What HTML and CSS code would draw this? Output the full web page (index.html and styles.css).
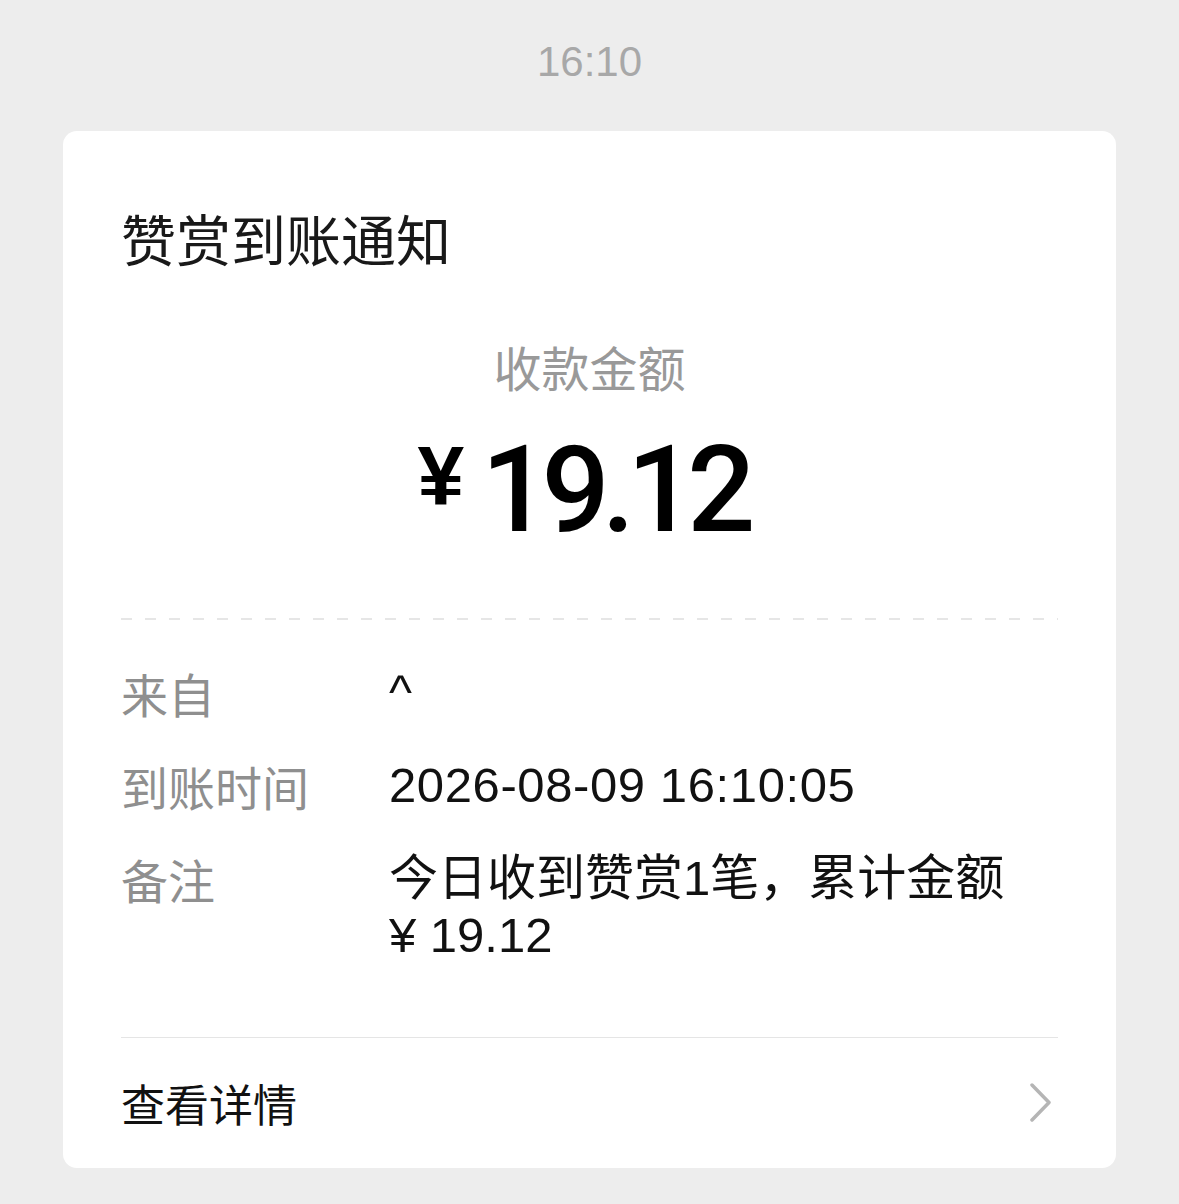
FILE: index.html
```html
<!DOCTYPE html>
<html lang="zh-CN">
<head>
<meta charset="utf-8">
<title>赞赏到账通知</title>
<link rel="stylesheet" href="styles.css">
</head>
<body>
<div class="time">16:10</div>
<div class="card">
  <div class="title">赞赏到账通知</div>
  <div class="amount-label">收款金额</div>
  <div class="amount"><span class="currency">¥</span><span class="num">19.12</span></div>
  <div class="dash"></div>
  <div class="rows">
    <div class="row"><div class="label">来自</div><div class="value">^</div></div>
    <div class="row"><div class="label">到账时间</div><div class="value date">2026-08-09 16:10:05</div></div>
    <div class="row"><div class="label">备注</div><div class="value">今日收到赞赏1笔，累计金额<br>¥ 19.12</div></div>
  </div>
  <div class="footer">
    <span class="footer-text">查看详情</span>
    <svg class="chevron" width="24" height="40" viewBox="0 0 24 40"><path d="M3 2 L20 19.5 L3 37" fill="none" stroke="#b5b5b5" stroke-width="3.5" stroke-linecap="round" stroke-linejoin="round"/></svg>
  </div>
</div>
</body>
</html>
```

FILE: styles.css
```css
html, body {
  margin: 0;
  padding: 0;
}
body {
  background: #ededed;
  font-family: "Liberation Sans", "Noto Sans CJK SC", sans-serif;
  width: 1179px;
  height: 1204px;
  overflow: hidden;
}
.time {
  padding-top: 37px;
  height: 49px;
  line-height: 49px;
  font-size: 42px;
  color: #a8a8a8;
  text-align: center;
}
.card {
  margin: 45px 63px 0;
  background: #ffffff;
  border-radius: 14px;
  padding: 74px 58px 0;
}
.title {
  font-size: 55px;
  line-height: 64px;
  color: #191919;
  font-family: "Noto Sans CJK SC", sans-serif;
}
.amount-label {
  margin-top: 69px;
  font-size: 48px;
  line-height: 56px;
  color: #999999;
  text-align: center;
  font-family: "Noto Sans CJK SC", sans-serif;
}
.amount {
  margin-top: 36px;
  padding-right: 14px;
  display: flex;
  justify-content: center;
  align-items: flex-start;
  color: #000000;
}
.currency {
  font-family: "Liberation Sans", sans-serif;
  font-weight: bold;
  font-size: 84px;
  line-height: 1;
  margin-top: 4px;
  margin-right: 17px;
}
.num {
  font-family: Roboto, "Liberation Sans", sans-serif;
  font-weight: 500;
  font-size: 120px;
  line-height: 1;
  letter-spacing: -8px;
}
.dash {
  margin-top: 68px;
  height: 2px;
  background: repeating-linear-gradient(to right, #e6e6e6 0 11px, transparent 11px 24px);
}
.rows {
  margin-top: 44px;
  display: flex;
  flex-direction: column;
  gap: 36px;
}
.row {
  display: flex;
  font-size: 49px;
  line-height: 57px;
}
.label {
  width: 268px;
  flex: none;
  font-size: 47px;
  color: #8f8f8f;
  font-family: "Noto Sans CJK SC", sans-serif;
}
.value {
  color: #111111;
}
.date {
  letter-spacing: 0.6px;
}
.footer {
  margin-top: 73px;
  border-top: 1px solid #e5e5e5;
  height: 130px;
  display: flex;
  align-items: center;
  justify-content: space-between;
  padding-right: 5px;
}
.footer-text {
  font-size: 44px;
  line-height: 57px;
  color: #111111;
  font-family: "Noto Sans CJK SC", sans-serif;
}
.chevron {
  display: block;
}
```
